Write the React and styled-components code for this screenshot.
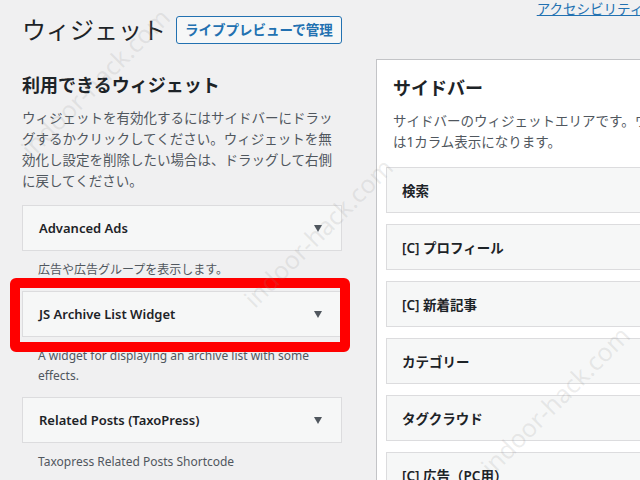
import React from "react"
import styled, { createGlobalStyle } from "styled-components"

const GlobalStyle = createGlobalStyle`
  html, body {
    margin: 0;
    padding: 0;
    background: #f0f0f1;
    overflow: hidden;
  }
  body {
    font-family: "Noto Sans", "Noto Sans CJK JP", sans-serif;
    color: #1d2327;
  }
`

const availableWidgets = [
  { title: "Advanced Ads", desc: ["広告や広告グループを表示します。"] },
  {
    title: "JS Archive List Widget",
    desc: ["A widget for displaying an archive list with some", "effects."],
    marked: true,
  },
  { title: "Related Posts (TaxoPress)", desc: ["Taxopress Related Posts Shortcode"] },
]

const sidebarWidgets = [
  "検索",
  "[C] プロフィール",
  "[C] 新着記事",
  "カテゴリー",
  "タグクラウド",
  "[C] 広告（PC用）",
]

const App = () => (
  <>
    <GlobalStyle />
    <Page>
      <Header>
        <PageTitle>ウィジェット</PageTitle>
        <OutlineButton>ライブプレビューで管理</OutlineButton>
        <ScreenLink>アクセシビリティモードを有効にする</ScreenLink>
      </Header>
      <Columns>
        <LeftColumn>
          <SectionTitle>利用できるウィジェット</SectionTitle>
          <Intro>
            ウィジェットを有効化するにはサイドバーにドラッグするかクリックしてください。ウィジェットを無効化し設定を削除したい場合は、ドラッグして右側に戻してください。
          </Intro>
          <WidgetList>
            {availableWidgets.map((w) => (
              <Widget key={w.title}>
                <WidgetTop>
                  <WidgetName>{w.title}</WidgetName>
                  <Arrow />
                  {w.marked && <Highlight />}
                </WidgetTop>
                <WidgetDesc>
                  {w.desc.map((line) => (
                    <div key={line}>{line}</div>
                  ))}
                </WidgetDesc>
              </Widget>
            ))}
          </WidgetList>
        </LeftColumn>
        <SidebarPanel>
          <PanelTitle>サイドバー</PanelTitle>
          <PanelDesc>
            サイドバーのウィジェットエリアです。ウィジェット
            <br />
            は1カラム表示になります。
          </PanelDesc>
          <SidebarList>
            {sidebarWidgets.map((name) => (
              <SidebarItem key={name}>{name}</SidebarItem>
            ))}
          </SidebarList>
        </SidebarPanel>
      </Columns>
      <Watermark $x={25} $y={140}>indoor-hack.com</Watermark>
      <Watermark $x={248} $y={290}>indoor-hack.com</Watermark>
      <Watermark $x={485} $y={458}>indoor-hack.com</Watermark>
    </Page>
  </>
)

export default App

const Page = styled.div`
  position: relative;
  width: 760px;
  height: 480px;
  padding-left: 22px;
  box-sizing: border-box;
`

const Header = styled.div`
  display: flex;
  align-items: center;
  padding-top: 16px;
  height: 28px;
`

const PageTitle = styled.h1`
  flex-shrink: 0;
  margin: 0;
  font-size: 24px;
  font-weight: 400;
  line-height: 28px;
  white-space: nowrap;
  color: #1d2327;
`

const OutlineButton = styled.button`
  flex-shrink: 0;
  margin-left: 10px;
  height: 28px;
  padding: 0 8px;
  border: 1px solid #2271b1;
  border-radius: 3px;
  background: #f6f7f7;
  color: #2271b1;
  font-family: inherit;
  font-size: 13.5px;
  font-weight: 600;
  line-height: 26px;
  white-space: nowrap;
`

const ScreenLink = styled.a`
  flex-shrink: 0;
  align-self: flex-start;
  margin-top: -16px;
  margin-left: 195px;
  font-size: 13.5px;
  line-height: 18px;
  color: #2271b1;
  text-decoration: underline;
  white-space: nowrap;
`

const Columns = styled.div`
  display: flex;
  gap: 34px;
  margin-top: 15px;
  align-items: flex-start;
`

const LeftColumn = styled.div`
  flex-shrink: 0;
  width: 320px;
  padding-top: 15px;
`

const SectionTitle = styled.h2`
  margin: 0;
  font-size: 18px;
  font-weight: 700;
  line-height: 22px;
`

const Intro = styled.p`
  margin: 12px 0 0;
  font-size: 13.5px;
  line-height: 21px;
  color: #50575e;
`

const WidgetList = styled.div`
  margin-top: 13px;
`

const Widget = styled.div`
  margin-bottom: 11px;
`

const WidgetTop = styled.div`
  position: relative;
  display: flex;
  align-items: center;
  justify-content: space-between;
  height: 46px;
  padding: 0 19px 0 16px;
  border: 1px solid #dcdcde;
  background: #f6f7f7;
  box-sizing: border-box;
`

const WidgetName = styled.span`
  font-size: 13px;
  font-weight: 600;
  color: #1d2327;
`

const Arrow = styled.span`
  width: 0;
  height: 0;
  border-left: 4.5px solid transparent;
  border-right: 4.5px solid transparent;
  border-top: 7px solid #50575e;
`

const Highlight = styled.span`
  position: absolute;
  left: -13px;
  top: -14px;
  right: -9px;
  bottom: -16px;
  border: 10px solid #ff0000;
  border-radius: 6px;
  pointer-events: none;
`

const WidgetDesc = styled.div`
  margin-top: 9px;
  padding-left: 16px;
  font-size: 12px;
  line-height: 20px;
  color: #50575e;
`

const SidebarPanel = styled.div`
  flex: 1;
  height: 440px;
  border: 1px solid #c3c4c7;
  background: #fff;
`

const PanelTitle = styled.h2`
  margin: 17px 0 0 16px;
  font-size: 18px;
  font-weight: 700;
  line-height: 22px;
`

const PanelDesc = styled.p`
  margin: 12px 0 0 16px;
  font-size: 13.5px;
  line-height: 21px;
  color: #50575e;
  white-space: nowrap;
`

const SidebarList = styled.div`
  display: flex;
  flex-direction: column;
  gap: 11px;
  margin: 14px 0 0 9px;
`

const SidebarItem = styled.div`
  display: flex;
  align-items: center;
  height: 46px;
  padding-left: 15px;
  border: 1px solid #dcdcde;
  background: #f6f7f7;
  box-sizing: border-box;
  font-size: 13.5px;
  font-weight: 600;
  color: #1d2327;
`

const Watermark = styled.div`
  position: absolute;
  left: ${(p) => p.$x}px;
  top: ${(p) => p.$y}px;
  transform: rotate(-45deg);
  transform-origin: left center;
  font-family: "Noto Sans", sans-serif;
  font-size: 25px;
  line-height: 25px;
  color: rgba(140, 140, 140, 0.16);
  pointer-events: none;
  white-space: nowrap;
`
